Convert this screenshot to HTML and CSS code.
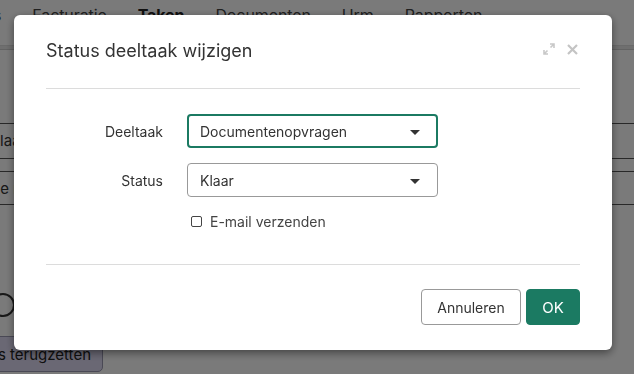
FILE: index.html
```html
<!DOCTYPE html>
<html lang="nl">
<head>
<meta charset="utf-8">
<title>Status deeltaak wijzigen</title>
<link rel="stylesheet" href="styles.css">
</head>
<body>
<div class="page">
  <nav class="tabs">
    <span class="tab cut">s</span>
    <span class="tab">Facturatie</span>
    <span class="tab active">Taken</span>
    <span class="tab">Documenten</span>
    <span class="tab">Urm</span>
    <span class="tab">Rapporten</span>
  </nav>
  <div class="bar"></div>
  <div class="rows">
    <div class="row r1"></div>
    <div class="row r2"><span class="cell">Klaar</span></div>
    <div class="row r3"></div>
    <div class="row r4"><span class="cell">de ma</span></div>
  </div>
  <div class="circle-wrap"><span class="circle"></span></div>
  <button class="reset">Status terugzetten</button>
</div>

<div class="overlay">
  <div class="modal">
    <div class="modal-header">
      <h2 class="modal-title">Status deeltaak wijzigen</h2>
      <div class="modal-tools">
        <svg class="tool" width="12" height="12" viewBox="0 0 12 12">
          <path d="M7 1h4v4M11 1 7.5 4.5M5 11H1V7M1 11l3.5-3.5" fill="none" stroke="#c8c8c8" stroke-width="1.6"/>
        </svg>
        <svg class="tool" width="11" height="11" viewBox="0 0 11 11">
          <path d="M1 1l9 9M10 1 1 10" fill="none" stroke="#c4c4c4" stroke-width="2.2"/>
        </svg>
      </div>
    </div>
    <div class="modal-body">
      <div class="form">
        <label class="label">Deeltaak</label>
        <div class="select focused"><span>Documentenopvragen</span><i class="caret"></i></div>
        <label class="label">Status</label>
        <div class="select"><span>Klaar</span><i class="caret"></i></div>
        <span></span>
        <label class="check"><span class="box"></span>E-mail verzenden</label>
      </div>
    </div>
    <div class="modal-footer">
      <button class="btn btn-default">Annuleren</button>
      <button class="btn btn-primary">OK</button>
    </div>
  </div>
</div>
</body>
</html>
```

FILE: styles.css
```css
* { box-sizing: border-box; }
html, body { margin: 0; height: 100%; }
body {
  font-family: Inter, "Noto Sans", sans-serif;
  color: #333;
  background: #fff;
  overflow: hidden;
}
.page { width: 634px; height: 374px; position: relative; }
.tabs {
  display: flex;
  height: 45px;
  align-items: flex-start;
  padding-top: 5px;
  margin-left: -7px;
  font-size: 16px;
  letter-spacing: -0.1px;
}
.tab { margin-right: 31px; color: #444; }
.tab.active { font-weight: 700; color: #222; }
.bar { height: 5px; background: #e8e8e8; border-top: 1px solid #ddd; }
.rows { margin-top: 47px; }
.row { border-top: 1px solid #555; }
.r1 { height: 0; border-top: 1px solid #ccc; margin-top: -48px; margin-bottom: 73px; }
.r2 { height: 35px; }
.r3 { height: 13px; }
.r4 { height: 34px; border-bottom: 1px solid #555; }
.cell { font-size: 15px; color: #333; margin-left: -10px; line-height: 34px; }
.r4 .cell { margin-left: -9px; }
.circle-wrap { margin-top: 88px; height: 24px; }
.circle {
  display: block; width: 24px; height: 24px; margin-left: -9px;
  border: 2px solid #333; border-radius: 50%;
}
.reset {
  display: block;
  margin: 19px 0 0 -70px;
  height: 36px;
  width: 173px;
  text-align: right;
  padding: 0 11px 0 0;
  font: 15px Inter, sans-serif;
  color: #222;
  background: #ddd9f2;
  border: 1px solid #9b98b2;
  border-radius: 5px;
}

.overlay {
  position: fixed;
  inset: 0;
  background: rgba(0, 0, 0, 0.52);
  padding: 15px 0 0 14px;
}
.modal {
  width: 598px;
  height: 335px;
  background: #fff;
  border-radius: 6px;
  box-shadow: 0 3px 9px rgba(0, 0, 0, 0.45);
  display: flex;
  flex-direction: column;
}
.modal-header {
  margin: 0 32px;
  height: 74px;
  border-bottom: 1px solid #dcdcdc;
  display: flex;
  align-items: center;
  justify-content: space-between;
  padding-bottom: 3px;
}
.modal-title {
  margin: 0;
  font-size: 18px;
  font-weight: 400;
  color: #333;
}
.modal-tools { display: flex; gap: 12px; align-items: center; margin-top: -2px; margin-right: 2px; }
.tool { display: block; }
.modal-body {
  margin: 0 32px;
  padding: 25px 0 0;
  height: 176px;
  border-bottom: 1px solid #dcdcdc;
}
.form {
  display: grid;
  grid-template-columns: 117px 251px;
  column-gap: 24px;
  row-gap: 15px;
  align-items: center;
}
.label { text-align: right; font-size: 14px; color: #333; }
.select {
  height: 34px;
  border: 1px solid #999;
  border-radius: 4px;
  display: flex;
  align-items: center;
  justify-content: space-between;
  padding: 0 17px 0 12px;
  font-size: 14px;
  color: #333;
}
.select.focused { border: 2px solid #1b7a62; padding-left: 11px; padding-right: 16px; }
.caret {
  width: 0; height: 0;
  border-left: 5px solid transparent;
  border-right: 5px solid transparent;
  border-top: 5px solid #333;
  margin-top: 3px;
}
.check {
  display: flex;
  align-items: center;
  font-size: 14px;
  color: #444;
  margin-top: 1px;
  padding-left: 4px;
}
.box {
  width: 11px; height: 11px;
  border: 1px solid #444;
  border-radius: 2px;
  margin-right: 8px;
}
.modal-footer {
  display: flex;
  justify-content: flex-end;
  gap: 5px;
  padding: 24px 32px 0;
}
.btn {
  height: 36px;
  font: 14px Inter, sans-serif;
  border-radius: 4px;
  cursor: pointer;
}
.btn-default {
  width: 100px;
  background: #fff;
  color: #333;
  border: 1px solid #999;
}
.btn-primary {
  width: 54px;
  background: #1b7a62;
  color: #fff;
  border: 1px solid #1b7a62;
  font-size: 15px;
}
```
